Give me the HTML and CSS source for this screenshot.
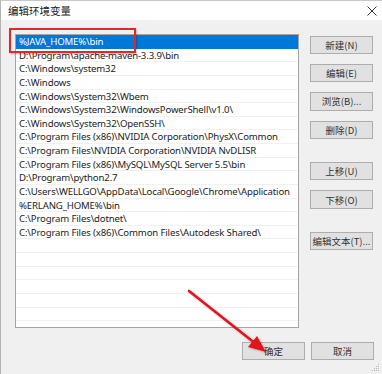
FILE: index.html
```html
<!DOCTYPE html>
<html>
<head>
<meta charset="utf-8">
<link rel="stylesheet" href="styles.css">
</head>
<body>
<div class="window">
  <div class="titlebar">
    <span class="title">编辑环境变量</span>
    <svg class="close" width="10" height="10" viewBox="0 0 10 10"><path d="M0.5 0.5 L9.5 9.5 M9.5 0.5 L0.5 9.5" stroke="#333" stroke-width="1"/></svg>
  </div>
  <div class="content">
    <div class="list">
      <div class="row selected">%JAVA_HOME%\bin</div>
      <div class="row">D:\Program\apache-maven-3.3.9\bin</div>
      <div class="row">C:\Windows\system32</div>
      <div class="row">C:\Windows</div>
      <div class="row">C:\Windows\System32\Wbem</div>
      <div class="row">C:\Windows\System32\WindowsPowerShell\v1.0\</div>
      <div class="row">C:\Windows\System32\OpenSSH\</div>
      <div class="row">C:\Program Files (x86)\NVIDIA Corporation\PhysX\Common</div>
      <div class="row">C:\Program Files\NVIDIA Corporation\NVIDIA NvDLISR</div>
      <div class="row">C:\Program Files (x86)\MySQL\MySQL Server 5.5\bin</div>
      <div class="row">D:\Program\python2.7</div>
      <div class="row">C:\Users\WELLGO\AppData\Local\Google\Chrome\Application</div>
      <div class="row">%ERLANG_HOME%\bin</div>
      <div class="row">C:\Program Files\dotnet\</div>
      <div class="row">C:\Program Files (x86)\Common Files\Autodesk Shared\</div>
      <div class="row"></div>
      <div class="row"></div>
      <div class="row"></div>
      <div class="row"></div>
      <div class="row"></div>
      <div class="row"></div>
      <div class="row"></div>
    </div>
    <div class="side">
      <div class="group">
        <button class="btn">新建(N)</button>
        <button class="btn">编辑(E)</button>
        <button class="btn">浏览(B)...</button>
        <button class="btn">删除(D)</button>
      </div>
      <div class="group">
        <button class="btn">上移(U)</button>
        <button class="btn">下移(O)</button>
      </div>
      <div class="group">
        <button class="btn">编辑文本(T)...</button>
      </div>
    </div>
  </div>
  <div class="footer">
    <button class="btn">确定</button>
    <button class="btn">取消</button>
  </div>
  <div class="grip">
    <svg width="8" height="8" viewBox="0 0 8 8"><g fill="#b8b8b8"><rect x="6" y="0" width="1" height="1"/><rect x="4" y="2" width="1" height="1"/><rect x="6" y="2" width="1" height="1"/><rect x="2" y="4" width="1" height="1"/><rect x="4" y="4" width="1" height="1"/><rect x="6" y="4" width="1" height="1"/><rect x="0" y="6" width="1" height="1"/><rect x="2" y="6" width="1" height="1"/><rect x="4" y="6" width="1" height="1"/><rect x="6" y="6" width="1" height="1"/></g></svg>
  </div>
  <div class="highlight"></div>
  <svg class="arrow" width="382" height="374" viewBox="0 0 382 374">
    <defs>
      <filter id="sh" x="-20%" y="-20%" width="140%" height="140%">
        <feDropShadow dx="1" dy="1" stdDeviation="1" flood-color="#000" flood-opacity="0.25"/>
      </filter>
    </defs>
    <g filter="url(#sh)">
      <line x1="189" y1="291" x2="256" y2="344" stroke="#e0141e" stroke-width="2.6" stroke-linecap="round"/>
      <polygon points="266,352 248,347 257,336" fill="#e0141e"/>
    </g>
  </svg>
</div>
</body>
</html>
```
FILE: styles.css
```css
* { box-sizing: border-box; }
html, body {
  margin: 0;
  padding: 0;
  width: 382px;
  height: 374px;
  overflow: hidden;
  background: #f0f0f0;
}
.window {
  position: relative;
  width: 382px;
  height: 374px;
  background: #f0f0f0;
  border-left: 1px solid #b4b4b4;
  border-top: 1px solid #c8c8c8;
  font-family: "Noto Sans", "Noto Sans CJK SC", sans-serif;
  color: #000;
}
.titlebar {
  height: 19px;
  background: #fff;
  display: flex;
  align-items: center;
  justify-content: space-between;
  padding: 0 5px 0 7px;
}
.title {
  font-family: "Noto Sans CJK SC", sans-serif;
  font-size: 10.5px;
  color: #222;
}
.close { display: block; }
.content {
  display: flex;
  padding: 14px 0 0 14px;
}
.list {
  width: 284px;
  height: 294px;
  border: 1px solid #a5a5a5;
  background: #fff;
  overflow: hidden;
}
.row {
  height: 13.64px;
  line-height: 13px;
  border-bottom: 1px solid #f1f1f1;
  padding-left: 3px;
  font-size: 9.6px;
  letter-spacing: -0.15px;
  white-space: nowrap;
  color: #222;
}
.row.selected {
  background: #0078d7;
  color: #fff;
  border-bottom-color: #0078d7;
}
.side {
  display: flex;
  flex-direction: column;
  gap: 23px;
  margin-left: 11px;
  padding-top: 1.5px;
}
.group {
  display: flex;
  flex-direction: column;
  gap: 10px;
}
.btn {
  width: 63px;
  height: 18.4px;
  padding: 0;
  margin: 0;
  background: #e1e1e1;
  border: 1px solid #adadad;
  font-family: "Noto Sans CJK SC", sans-serif;
  font-size: 9.5px;
  color: #333;
  line-height: 16px;
}
.footer {
  display: flex;
  justify-content: flex-end;
  gap: 6px;
  padding: 14px 8px 0 0;
}
.grip {
  position: absolute;
  right: 2px;
  bottom: 2px;
  line-height: 0;
}
.highlight {
  position: absolute;
  left: 8px;
  top: 27px;
  width: 127px;
  height: 25px;
  border: 2px solid #e3262c;
  box-shadow: 1px 1px 2px rgba(0,0,0,0.25);
}
.arrow {
  position: absolute;
  left: -1px;
  top: -1px;
  pointer-events: none;
}
```
